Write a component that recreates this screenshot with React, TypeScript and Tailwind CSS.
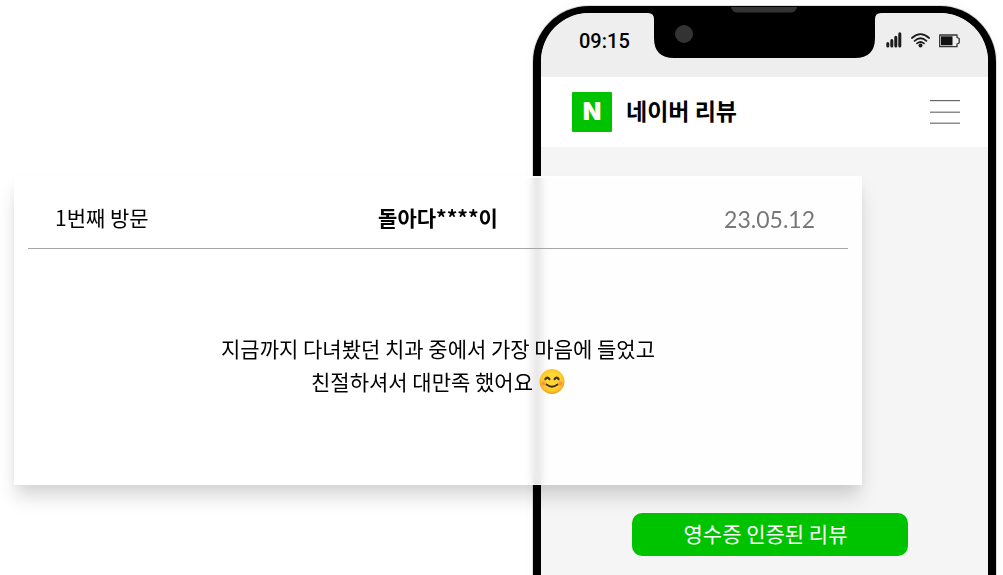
export default function App() {
  return (
    <main className="grid min-h-screen grid-cols-[519fr_329fr_134fr] items-start overflow-hidden bg-white pl-3.5 pr-[7px] font-['Noto_Sans_CJK_KR','Noto_Sans',sans-serif] text-black">
      <Phone />
      <ReviewCard
        visit="1번째 방문"
        author="돌아다****이"
        date="23.05.12"
      />
    </main>
  );
}

function Phone() {
  return (
    <section className="col-span-2 col-start-2 row-start-1 mt-1.5 flex min-h-[calc(100vh-6px)] flex-col rounded-t-[56px] border-x-8 border-t-[7px] border-black bg-[#f5f5f5] shadow-[0_0_0_1px_#dddddd,0_0_0_6px_#fdfdfd]">
      {/* Status bar */}
      <div className="grid h-16 grid-cols-[1fr_auto_1fr] items-start rounded-t-[48px] bg-[#eeeeee]">
        <time className="flex h-14 items-center pl-[38px] font-['Roboto',sans-serif] text-xl font-medium">
          09:15
        </time>
        <Notch />
        <div className="flex h-14 items-center justify-end gap-2 pr-7">
          <SignalIcon />
          <WifiIcon />
          <BatteryIcon />
        </div>
      </div>

      {/* App header */}
      <header className="flex h-[70px] items-center bg-white pl-[31px] pr-7">
        <span className="flex size-10 items-center justify-center rounded-[1px] bg-[#00c300] font-['Inter',sans-serif] text-2xl font-black leading-none text-white">
          N
        </span>
        <h1 className="ml-3.5 pb-1 text-[23px] font-bold leading-8">네이버 리뷰</h1>
        <button type="button" aria-label="메뉴" className="ml-auto">
          <svg width="30" height="25" viewBox="0 0 30 25" className="block">
            <path d="M0 .5h30" stroke="#666666" strokeWidth="1.400" />
            <path d="M0 12.300h30M0 23.300h30" stroke="#8c8c8c" strokeWidth="1.400" />
          </svg>
        </button>
      </header>

      <div className="flex flex-1 flex-col items-center justify-end pb-[19px] pl-2.5">
        <button
          type="button"
          className="h-[43px] w-[276px] max-w-full rounded-[10px] bg-[#00c300] pb-1 pr-2 text-[21px] leading-8 text-white"
        >
          영수증 인증된 리뷰
        </button>
      </div>
    </section>
  );
}

function ReviewCard({
  visit,
  author,
  date,
}: {
  visit: string;
  author: string;
  date: string;
}) {
  return (
    <article className="z-10 col-span-2 col-start-1 row-start-1 mt-44 border border-t-2 border-white/70 bg-white/88 px-[13px] shadow-[0_14px_18px_-2px_rgba(0,0,0,0.15),0_4px_10px_rgba(0,0,0,0.04)] backdrop-blur-xs">
      <header className="grid h-[71px] grid-cols-[1fr_auto_1fr] items-center border-b border-[#a6a6a6] px-[27px] pt-2 text-[21px] leading-8">
        <span>{visit}</span>
        <strong className="font-bold">{author}</strong>
        <time className="pr-1.5 pt-1 text-right font-['Lato',sans-serif] text-[23px] text-[#777777]">
          {date}
        </time>
      </header>
      <p className="flex min-h-[235px] flex-col items-center justify-center pb-1 text-center text-[21px] leading-[33px]">
        <span>지금까지 다녀봤던 치과 중에서 가장 마음에 들었고</span>
        <span className="flex items-center gap-1.5">
          친절하셔서 대만족 했어요
          <SmileIcon />
        </span>
      </p>
    </article>
  );
}

function Notch() {
  return (
    <svg width="233" height="45" viewBox="0 0 233 45" className="block overflow-visible">
      <path d="M0 -1H233V0Q227 0 227 6V25Q227 45 207 45H26Q6 45 6 25V6Q6 0 0 0Z" />
      <circle cx="36" cy="21" r="9" fill="#333333" />
      <path d="M83 -6h66q-1 5.500 -7 5.500H90q-6 0 -7-5.500Z" fill="#333333" />
    </svg>
  );
}

function SignalIcon() {
  return (
    <svg width="17" height="18" viewBox="0 0 17 18" className="block">
      <path
        d="M1.800 11.500v2.500M5.800 8.600v5.400M9.800 5.300v8.700M13.800 1.800v12.200"
        stroke="#1c1c1c"
        strokeWidth="3"
        strokeLinecap="round"
      />
    </svg>
  );
}

function WifiIcon() {
  return (
    <svg width="20" height="16" viewBox="0 0 20 16" className="block" fill="none" stroke="#1c1c1c">
      <path
        d="M.9 5Q9.500 -2.600 18.100 5M3.600 7.900Q9.500 2.600 15.400 7.900M6 10.400Q9.500 7.600 13 10.400"
        strokeWidth="1.700"
        strokeLinecap="round"
      />
      <circle cx="9.500" cy="12.600" r="2" fill="#1c1c1c" stroke="none" />
    </svg>
  );
}

function BatteryIcon() {
  return (
    <svg width="21" height="14" viewBox="0 0 21 14" className="block">
      <path
        d="M.7 1H18V3.500L20.200 4.500V9L18 10V12.700H.7Z"
        fill="#eeeeee"
        stroke="#333333"
        strokeWidth="1.300"
        strokeLinejoin="round"
      />
      <path d="M2 2.300h11.500v9H2Z" fill="#111111" />
    </svg>
  );
}

function SmileIcon() {
  return (
    <svg width="26" height="26" viewBox="0 0 26 26" role="img" aria-label="미소" className="block">
      <defs>
        <radialGradient id="face" cx="50%" cy="45%" r="52%">
          <stop offset="0.5" stopColor="#fdd835" />
          <stop offset="0.85" stopColor="#fcc728" />
          <stop offset="1" stopColor="#f4a41c" />
        </radialGradient>
        <radialGradient id="cheek">
          <stop offset="0" stopColor="#ff6f4f" stopOpacity="0.8" />
          <stop offset="1" stopColor="#ff7a45" stopOpacity="0" />
        </radialGradient>
      </defs>
      <circle cx="13" cy="13.500" r="12.500" fill="url(#face)" />
      <ellipse cx="4.500" cy="15.500" rx="4" ry="3.500" fill="url(#cheek)" />
      <ellipse cx="21.500" cy="15.500" rx="4" ry="3.500" fill="url(#cheek)" />
      <path
        d="M6.400 11.200Q8.400 8 10.400 11.200M15.600 11.200Q17.600 8 19.600 11.200"
        fill="none"
        stroke="#4a2d22"
        strokeWidth="2.200"
        strokeLinecap="round"
      />
      <path
        d="M7.500 16.500Q13 21 18.500 16.500"
        fill="none"
        stroke="#4a2d22"
        strokeWidth="1.700"
        strokeLinecap="round"
      />
    </svg>
  );
}
